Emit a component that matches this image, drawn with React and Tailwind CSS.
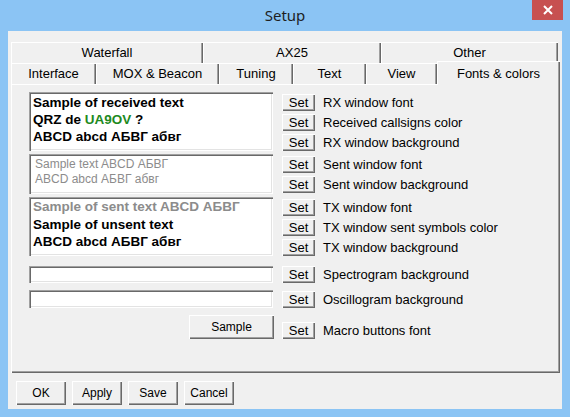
const raised =
  "bg-[#f0f0f0] shadow-[inset_1px_1px_0_#ffffff,inset_-1px_-1px_0_#696969,inset_-2px_-2px_0_#a0a0a0]";
const sunken =
  "bg-white shadow-[inset_1px_1px_0_#a0a0a0,inset_2px_2px_0_#696969,inset_-1px_-1px_0_#ffffff,inset_-2px_-2px_0_#e3e3e3]";
const tabCls =
  "flex items-center justify-center bg-[#f0f0f0] shadow-[inset_1px_1px_0_#ffffff,inset_-1px_0_0_#696969,inset_-2px_0_0_#a0a0a0]";

const rowOne = [
  { label: "Waterfall", w: "w-[192px]" },
  { label: "AX25", w: "w-[178px]" },
  { label: "Other", w: "w-[177px]" },
];

const rowTwo = [
  { label: "Interface", w: "w-[85px]" },
  { label: "MOX & Beacon", w: "w-[123px]" },
  { label: "Tuning", w: "w-[74px]" },
  { label: "Text", w: "w-[73px]" },
  { label: "View", w: "w-[71px]" },
];

function SetRow({ label }) {
  return (
    <div className="flex items-center">
      <button className={`${raised} h-[17px] w-[33px] text-[13px] leading-none text-black`}>
        Set
      </button>
      <span className="ml-[8px] text-[13px] leading-none text-black">{label}</span>
    </div>
  );
}

function Group({ h, labels, children, className = "" }) {
  return (
    <div className={`flex ${className}`}>
      <div className={`${sunken} w-[244px] ${h}`}>{children}</div>
      <div className="ml-[9px] flex flex-col gap-[3px] pt-[2px]">
        {labels.map((l) => (
          <SetRow key={l} label={l} />
        ))}
      </div>
    </div>
  );
}

export default function App() {
  return (
    <div
      className="flex h-[417px] w-[570px] flex-col bg-[#8bc4f4] px-[8px] pb-[8px]"
      style={{ fontFamily: '"Liberation Sans", Arial, sans-serif' }}
    >
      {/* title bar */}
      <div className="relative flex h-[31px] shrink-0 items-center justify-center">
        <span
          className="text-[15px] text-[#1e1e1e]"
          style={{ fontFamily: '"Noto Sans", "Open Sans", sans-serif' }}
        >
          Setup
        </span>
        <button className="absolute right-[-1px] top-0 flex h-[20px] w-[31px] items-center justify-center bg-[#c75050]">
          <svg width="10" height="10" viewBox="0 0 10 10">
            <path d="M1 1 L9 9 M9 1 L1 9" stroke="#ffffff" strokeWidth="2" />
          </svg>
        </button>
      </div>

      {/* client area */}
      <div className="flex flex-1 flex-col bg-[#f0f0f0] pl-[3px] pr-[2px] pt-[11px]">
        <div className="flex h-[21px] text-[13px] text-black">
          {rowOne.map((t) => (
            <div key={t.label} className={`${tabCls} ${t.w}`}>
              {t.label}
            </div>
          ))}
        </div>
        <div className="flex h-[21px] items-end text-[13px] text-black">
          {rowTwo.map((t) => (
            <div key={t.label} className={`${tabCls} ${t.w} h-[21px]`}>
              {t.label}
            </div>
          ))}
          <div
            className={`${tabCls} relative z-10 -mb-px h-[24px] w-[123px] items-start pt-[3px]`}
          >
            Fonts &amp; colors
          </div>
        </div>

        {/* panel */}
        <div
          className={`${raised} flex h-[289px] flex-col pl-[18px] pt-[8px]`}
        >
          <Group
            h="h-[59px]"
            labels={["RX window font", "Received callsigns color", "RX window background"]}
          >
            <div className="pl-[4px] pt-[2px] text-[13.5px] font-bold leading-[17px] text-black">
              <div>Sample of received text</div>
              <div>
                QRZ de <span className="text-[#1e8a1e]">UA9OV</span> ?
              </div>
              <div>ABCD abcd АБВГ абвг</div>
            </div>
          </Group>

          <Group
            className="mt-[3px]"
            h="h-[40px]"
            labels={["Sent window font", "Sent window background"]}
          >
            <div className="pl-[6px] pt-[3px] text-[12px] leading-[15px] text-[#8c8c8c]">
              <div>Sample text ABCD АБВГ</div>
              <div>ABCD abcd АБВГ абвг</div>
            </div>
          </Group>

          <Group
            className="mt-[3px]"
            h="h-[59px]"
            labels={["TX window font", "TX window sent symbols color", "TX window background"]}
          >
            <div className="pl-[4px] pt-[1px] text-[13.5px] font-bold leading-[17.5px] text-black">
              <div className="text-[#8c8c8c]">Sample of sent text ABCD АБВГ</div>
              <div>Sample of unsent text</div>
              <div>ABCD abcd АБВГ абвг</div>
            </div>
          </Group>

          <div className="mt-[10px] flex items-center">
            <div className={`${sunken} h-[17px] w-[244px]`} />
            <div className="ml-[9px]">
              <SetRow label="Spectrogram background" />
            </div>
          </div>

          <div className="mt-[7px] flex items-center">
            <div className={`${sunken} h-[18px] w-[244px]`} />
            <div className="ml-[9px]">
              <SetRow label="Oscillogram background" />
            </div>
          </div>

          <div className="mt-[7px] flex items-end">
            <div className="flex w-[245px] justify-end">
              <button className={`${raised} h-[24px] w-[85px] text-[12px] text-black`}>
                Sample
              </button>
            </div>
            <div className="ml-[8px]">
              <SetRow label="Macro buttons font" />
            </div>
          </div>
        </div>

        {/* bottom buttons */}
        <div className="mt-[8px] flex gap-[6px] pl-[5px]">
          {["OK", "Apply", "Save", "Cancel"].map((b) => (
            <button
              key={b}
              className={`${raised} h-[24px] w-[50px] text-[12px] text-black`}
            >
              {b}
            </button>
          ))}
        </div>
      </div>
    </div>
  );
}
